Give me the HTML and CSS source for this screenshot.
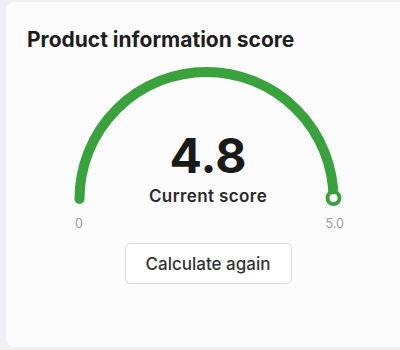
FILE: index.html
```html
<!DOCTYPE html>
<html>
<head>
<meta charset="utf-8">
<link rel="stylesheet" href="styles.css">
</head>
<body>
<div class="card">
  <h2 class="title">Product information score</h2>
  <div class="gauge">
    <svg class="arc" width="404" height="150" viewBox="0 0 404 150">
      <path d="M 73.5 139 A 127 127 0 0 1 327.5 139" fill="none" stroke="#3aa23c" stroke-width="10" stroke-linecap="round"/>
      <circle cx="327.5" cy="138" r="6" fill="#ffffff" stroke="#3aa23c" stroke-width="4"/>
    </svg>
    <div class="readout">
      <div class="value">4.8</div>
      <div class="caption">Current score</div>
      <div class="scale"><span>0</span><span>5.0</span></div>
    </div>
  </div>
  <button class="btn">Calculate again</button>
</div>
</body>
</html>
```
FILE: styles.css
```css
html, body {
  margin: 0;
  padding: 0;
}
body {
  background: #eef0f3;
  overflow: hidden;
  width: 400px;
  height: 350px;
  font-family: Inter, "Noto Sans", sans-serif;
}
.card {
  margin: 2px 0 0 6px;
  width: 404px;
  height: 345px;
  box-sizing: border-box;
  padding-top: 26px;
  background: #fcfcfc;
  border-radius: 8px;
  display: flex;
  flex-direction: column;
  align-items: center;
}
.title {
  align-self: flex-start;
  margin: 0 0 0 21px;
  font-size: 21px;
  line-height: 24px;
  font-weight: 700;
  color: #1e1e1e;
}
.gauge {
  margin-top: 8px;
  width: 404px;
  display: grid;
}
.arc {
  grid-area: 1 / 1;
  display: block;
}
.readout {
  grid-area: 1 / 1;
  padding-top: 71.5px;
  display: flex;
  flex-direction: column;
  align-items: center;
}
.value {
  font-size: 48px;
  line-height: 48px;
  font-weight: 700;
  color: #1a1a1a;
}
.caption {
  margin-top: 6.5px;
  font-size: 17px;
  line-height: 20px;
  font-weight: 600;
  letter-spacing: 0.4px;
  color: #2a2a2a;
}
.scale {
  align-self: stretch;
  margin-top: 11px;
  padding: 0 66px 0 69px;
  display: flex;
  justify-content: space-between;
  font-size: 12.5px;
  line-height: 14px;
  color: #9a9a9a;
}
.btn {
  margin-top: 12px;
  width: 167px;
  height: 41px;
  box-sizing: border-box;
  padding: 11px 0 9px;
  background: #ffffff;
  border: 1px solid #dcdcdc;
  border-radius: 5px;
  font-family: Inter, "Noto Sans", sans-serif;
  font-size: 17px;
  line-height: 19px;
  font-weight: 500;
  color: #333333;
}
```
